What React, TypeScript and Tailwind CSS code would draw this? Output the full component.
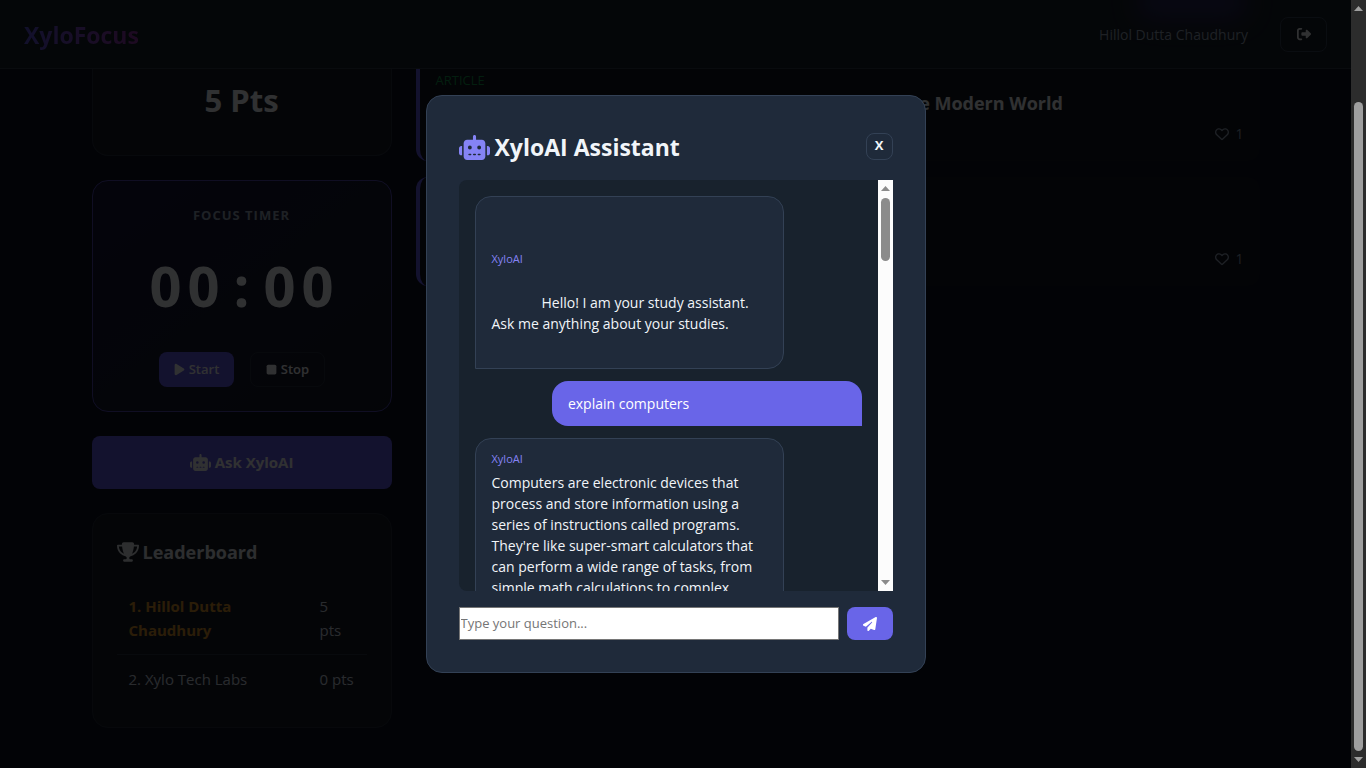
import React from "react";
import {
  FaPaperPlane,
  FaPlay,
  FaRegHeart,
  FaRightFromBracket,
  FaRobot,
  FaStop,
  FaTrophy,
} from "react-icons/fa6";

function Navbar() {
  return (
    <header className="relative z-10 flex h-[69px] shrink-0 items-center justify-between overflow-hidden border-b border-[#2f3846] bg-[#181e28] px-6">
      <div className="absolute -top-4 left-[1136px] h-9 w-28 rounded-full bg-[#322c80] opacity-60 blur-md" />
      <a
        href="#home"
        className="bg-linear-to-r from-[#5a52d8] to-[#9333a8] bg-clip-text pt-[2px] text-[23px] leading-9 font-bold text-transparent"
      >
        XyloFocus
      </a>
      <div className="relative flex items-center gap-8">
        <span className="text-[14px] text-[#94a3b8]">Hillol Dutta Chaudhury</span>
        <button
          type="button"
          aria-label="Log out"
          className="flex h-[35px] w-[47px] items-center justify-center rounded-lg border border-[#334155] text-[14px] text-[#f1f5f9]"
        >
          <FaRightFromBracket />
        </button>
      </div>
    </header>
  );
}

function PointsCard() {
  return (
    <section className="flex h-[111px] items-end justify-center rounded-b-2xl border border-t-0 border-[#262f3e] bg-[#171c27] pb-8">
      <p className="text-[31px] leading-[46px] font-bold">5 Pts</p>
    </section>
  );
}

function TimerCard() {
  return (
    <section className="flex flex-col items-center rounded-2xl border border-[#4f48b0] bg-linear-to-br from-[#16153a] to-[#171c27] p-6">
      <h2 className="text-[13px] leading-[21px] font-bold tracking-[1px] text-[#94a3b8]">
        FOCUS TIMER
      </h2>
      <p className="mt-5 mb-7 flex text-[56px] leading-[78px] font-bold">
        {["0", "0", ":", "0", "0"].map((char, i) => (
          <span key={i} className="w-[38px] text-center">
            {char}
          </span>
        ))}
      </p>
      <div className="flex gap-4">
        <button
          type="button"
          className="flex h-[35px] w-[75px] items-center justify-center gap-[3px] rounded-lg bg-[#6159e6] text-[13px] font-semibold"
        >
          <FaPlay className="text-[13px]" />
          Start
        </button>
        <button
          type="button"
          className="flex h-[35px] w-[75px] items-center justify-center gap-[3px] rounded-lg border border-[#262f3e] text-[13px] font-semibold"
        >
          <FaStop className="text-[13px]" />
          Stop
        </button>
      </div>
    </section>
  );
}

const leaders = [
  { name: "1. Hillol Dutta Chaudhury", points: "5 pts", first: true },
  { name: "2. Xylo Tech Labs", points: "0 pts", first: false },
];

function Leaderboard() {
  return (
    <section className="rounded-2xl border border-[#232b39] bg-[#171c27] p-6">
      <h2 className="mb-4 flex items-center gap-1 text-[18px] leading-7 font-bold text-[#dfe4ea]">
        <FaTrophy className="h-5 w-[22px]" />
        Leaderboard
      </h2>
      <table className="w-full table-fixed text-[15px] leading-6 text-[#cbd5e1]">
        <tbody>
          {leaders.map((leader) => (
            <tr key={leader.name} className="border-b border-[#2a3342] last:border-0">
              <td
                className={
                  leader.first ? "p-3 align-top font-bold text-[#d8922a]" : "p-3 align-top"
                }
              >
                {leader.name}
              </td>
              <td
                className={
                  leader.first
                    ? "w-[59px] py-3 pr-6 pl-3 align-top"
                    : "w-[59px] py-3 pl-3 align-top whitespace-nowrap"
                }
              >
                {leader.points}
              </td>
            </tr>
          ))}
        </tbody>
      </table>
    </section>
  );
}

function Likes() {
  return (
    <button
      type="button"
      className="flex items-center gap-[6px] text-[14px] leading-6 text-[#94a3b8]"
    >
      <FaRegHeart className="text-[14px]" />1
    </button>
  );
}

function Feed() {
  return (
    <div className="flex flex-col gap-4">
      <article className="flex h-[116px] flex-col rounded-b-xl border-l-4 border-[#6159e6] bg-[#10141f] px-4 pt-[25px]">
        <span className="text-[13px] leading-5 text-[#12964a]">ARTICLE</span>
        <h3 className="pl-[464px] text-[18px] leading-[26px] font-bold">the Modern World</h3>
        <div className="mt-[6px] flex justify-end">
          <Likes />
        </div>
      </article>
      <article className="flex h-[109px] items-end justify-end rounded-xl border-l-4 border-[#6159e6] bg-[#10141f] px-4 pb-[15px]">
        <Likes />
      </article>
    </div>
  );
}

function BotLabel() {
  return <span className="block text-[11px] leading-[18px] text-[#8583f5]">XyloAI</span>;
}

function ChatLog() {
  return (
    <div className="flex h-[411px] overflow-hidden rounded-l-lg bg-[#18222d]">
      <div className="flex min-w-0 flex-1 flex-col gap-3 overflow-y-auto p-4 text-[14px] leading-[21px] [scrollbar-width:none]">
        <div className="w-4/5 shrink-0 rounded-2xl rounded-bl-none border border-[#334155] bg-[#1f2a3a] px-4 pt-[53px] pb-[34px]">
          <BotLabel />
          <p className="mt-6 indent-[50px]">
            Hello! I am your study assistant. Ask me anything about your studies.
          </p>
        </div>
        <div className="w-4/5 shrink-0 self-end rounded-2xl rounded-br-none bg-[#6965e8] px-4 py-3 text-white">
          explain computers
        </div>
        <div className="w-4/5 shrink-0 rounded-2xl rounded-bl-none border border-[#334155] bg-[#1f2a3a] px-4 py-[11px]">
          <BotLabel />
          <p className="mt-1">
            Computers are electronic devices that process and store information using a series of
            instructions called programs. They're like super-smart calculators that can perform a
            wide range of tasks, from simple math calculations to complex
          </p>
        </div>
      </div>
      <div className="flex w-[15px] shrink-0 flex-col items-center bg-[#fcfcfc] py-[6px]">
        <svg viewBox="0 0 9 5" className="h-[5px] w-[9px] shrink-0 fill-[#8b8b8b]">
          <path d="M0 5 4.500 0 9 5z" />
        </svg>
        <div className="mt-[7px] h-[63px] w-[9px] rounded-full bg-[#8b8b8b]" />
        <svg viewBox="0 0 9 5" className="mt-auto h-[5px] w-[9px] shrink-0 fill-[#8b8b8b]">
          <path d="M0 0h9L4.500 5z" />
        </svg>
      </div>
    </div>
  );
}

function AssistantDialog() {
  return (
    <div
      role="dialog"
      aria-labelledby="assistant-title"
      className="w-[500px] rounded-2xl border border-[#334155] bg-[#1f2a3a] p-8 text-[#f1f5f9]"
    >
      <div className="mb-4 flex h-9 items-center justify-between">
        <h2
          id="assistant-title"
          className="flex items-center gap-[5px] pt-[2px] text-[23px] leading-9 font-bold"
        >
          <FaRobot className="h-[25px] w-[31px] text-[#8583f5]" />
          XyloAI Assistant
        </h2>
        <button
          type="button"
          className="flex h-[27px] w-[27px] items-center justify-center rounded-lg border border-[#334155] text-[13px] font-bold"
        >
          X
        </button>
      </div>
      <ChatLog />
      <form className="mt-4 flex h-[33px] gap-2" onSubmit={(e) => e.preventDefault()}>
        <input
          type="text"
          aria-label="Your question"
          placeholder="Type your question..."
          className="min-w-0 flex-1 border border-[#767676] bg-white px-[1px] text-[13px] text-black placeholder:text-[#757575]"
        />
        <button
          type="submit"
          aria-label="Send"
          className="flex w-[46px] items-center justify-center rounded-lg bg-[#6965e8] text-[14px] text-white"
        >
          <FaPaperPlane />
        </button>
      </form>
    </div>
  );
}

function PageScrollbar() {
  return (
    <div className="flex w-[15px] shrink-0 flex-col items-center bg-[#2c2c2c] py-[6px]">
      <svg viewBox="0 0 9 5" className="h-[5px] w-[9px] shrink-0 fill-[#9f9f9f]">
        <path d="M0 5 4.500 0 9 5z" />
      </svg>
      <div className="mt-[91px] mb-[6px] w-[9px] flex-1 rounded-full bg-[#9f9f9f]" />
      <svg viewBox="0 0 9 5" className="h-[5px] w-[9px] shrink-0 fill-[#9f9f9f]">
        <path d="M0 0h9L4.500 5z" />
      </svg>
    </div>
  );
}

export default function App() {
  return (
    <div className="flex h-screen overflow-hidden font-['Open_Sans','Noto_Sans',sans-serif] text-[#f1f5f9]">
      <div className="relative flex min-w-0 flex-1 flex-col bg-[#0c0f20]">
        <Navbar />
        <main className="mx-auto w-full max-w-[1200px] flex-1 px-4">
          <div className="grid grid-cols-[300px_1fr] items-start gap-6">
            <div className="-mt-6 flex flex-col gap-6">
              <PointsCard />
              <TimerCard />
              <button
                type="button"
                className="flex h-[53px] items-center justify-center gap-1 rounded-lg bg-[#6159e6] text-[15px] font-bold"
              >
                <FaRobot className="h-[17px] w-[21px]" />
                Ask XyloAI
              </button>
              <Leaderboard />
            </div>
            <div className="-mt-6">
              <Feed />
            </div>
          </div>
        </main>
        <div className="absolute inset-0 z-20 flex items-center justify-center bg-black/80">
          <AssistantDialog />
        </div>
      </div>
      <PageScrollbar />
    </div>
  );
}
